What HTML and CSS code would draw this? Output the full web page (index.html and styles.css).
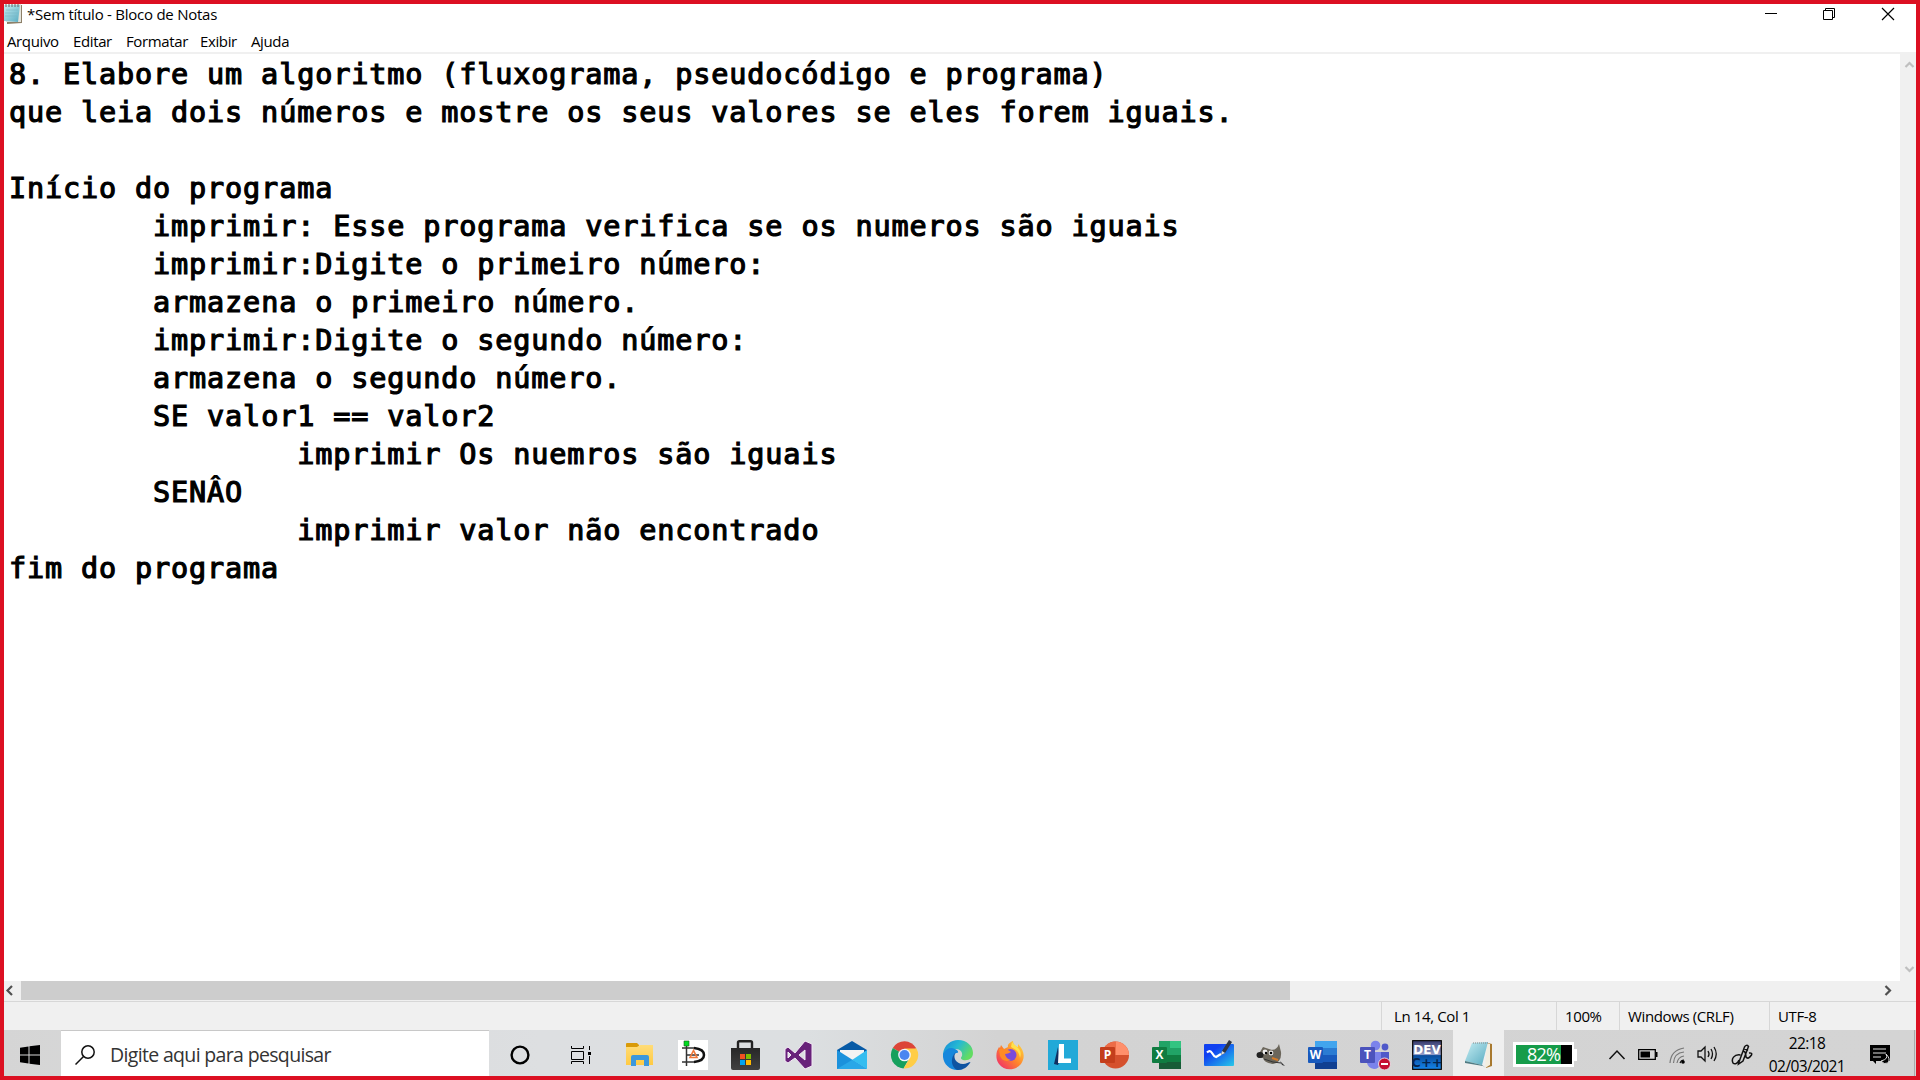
FILE: index.html
```html
<!DOCTYPE html>
<html lang="pt-BR">
<head>
<meta charset="utf-8">
<title>*Sem título - Bloco de Notas</title>
<link rel="stylesheet" href="styles.css">
</head>
<body>
<div class="screen">
  <header class="titlebar">
    <svg class="app-icon" width="19" height="20" viewBox="0 0 19 20"><path d="M3 2L18 1V19L3 20Z" fill="#8d8069"/><path d="M2 1L17 0V18L2 18Z" fill="#e4e4dc"/><path d="M0 1H16L14 18L0 17Z" fill="url(#note)"/><path d="M2 0V3M5 0V3M8 0V3M11 0V3M14 0V3" stroke="#666" stroke-width="1"/><path d="M2 6H14M1 9H14M1 12H13" stroke="#7ab6c2" stroke-width=".6"/></svg>
    <span class="caption">*Sem título - Bloco de Notas</span>
    <div class="window-buttons">
      <svg width="58" height="20" viewBox="0 0 58 20"><path d="M23 9.500H35" stroke="#000"/></svg>
      <svg width="59" height="20" viewBox="0 0 59 20" fill="none" stroke="#000"><path d="M23.500 6.500H32.500V15.500H23.500ZM25.500 6V4.500H34.500V13.500H33"/></svg>
      <svg width="57" height="20" viewBox="0 0 57 20"><path d="M23 4L35 16M35 4L23 16" stroke="#000" stroke-width="1.200"/></svg>
    </div>
  </header>
  <nav class="menubar"><span class="m1">Arquivo</span><span class="m2">Editar</span><span class="m3">Formatar</span><span class="m4">Exibir</span><span class="m5">Ajuda</span></nav>
  <main class="editor">
<pre class="text">8. Elabore um algoritmo (fluxograma, pseudocódigo e programa)
que leia dois números e mostre os seus valores se eles forem iguais.

Início do programa
	imprimir: Esse programa verifica se os numeros são iguais
	imprimir:Digite o primeiro número:
	armazena o primeiro número.
	imprimir:Digite o segundo número:
	armazena o segundo número.
	SE valor1 == valor2
		imprimir Os nuemros são iguais
	SENÂO
		imprimir valor não encontrado
fim do programa</pre>
    <div class="vscroll">
      <svg width="16" height="20" viewBox="0 0 16 20"><path d="M5.500 13L9.500 9L13.500 13" fill="none" stroke="#bfbfbf" stroke-width="2.200"/></svg>
      <svg width="16" height="20" viewBox="0 0 16 20"><path d="M5.500 6L9.500 10L13.500 6" fill="none" stroke="#bfbfbf" stroke-width="2.200"/></svg>
    </div>
  </main>
  <div class="hscroll">
    <svg width="17" height="19" viewBox="0 0 17 19"><path d="M8 5L3.500 9.500L8 14" fill="none" stroke="#505050" stroke-width="2.200"/></svg>
    <div class="thumb"></div>
    <svg class="right-arrow" width="17" height="19" viewBox="0 0 17 19"><path d="M3.500 5L8 9.500L3.500 14" fill="none" stroke="#505050" stroke-width="2.200"/></svg>
  </div>
  <footer class="status">
    <span class="s1">Ln 14, Col 1</span><span class="s2">100%</span><span class="s3">Windows (CRLF)</span><span class="s4">UTF-8</span>
  </footer>
  <div class="taskbar">
    <div class="start"><svg width="20" height="20" viewBox="0 0 20 20"><path d="M0 2.800L8.500 1.500V9.500H0ZM9.500 1.300L20 0V9.500H9.500ZM0 10.500H8.500V18.600L0 17.300ZM9.500 10.500H20V20L9.500 18.700Z"/></svg></div>
    <div class="search">
      <svg width="20" height="20" viewBox="0 0 20 20" fill="none" stroke="#111" stroke-width="1.500"><circle cx="13" cy="7" r="6.200"/><path d="M8.500 11.500L.5 19.500"/></svg>
      <span>Digite aqui para pesquisar</span>
    </div>
    <div class="cell sys"><svg width="20" height="20" viewBox="0 0 20 20"><circle cx="10" cy="10" r="8.400" fill="none" stroke="#000" stroke-width="2.400"/></svg></div>
    <div class="cell view"><svg width="20" height="20" viewBox="0 0 20 20" fill="none" stroke="#000"><path d="M.5 1V3.500H12.500V1M.5 6.500H12.500V14.500H.5ZM.5 19V16.500H12.500V19M18.500 1V5M18.500 11V19"/><path d="M17 7H20V10H17Z" fill="#000" stroke="none"/></svg></div>
    <div class="apps near">
      <div class="cell"><svg width="30" height="30" viewBox="0 0 30 30"><path d="M1 4Q1 3 2 3H12L14 5V8H1Z" fill="#d99a08"/><path d="M1 7H12L15 5H28V25H1Z" fill="url(#folder)"/><path d="M6 26V17Q6 15 8 15H22Q24 15 24 17V26H19V20H11V26Z" fill="#3c98dc"/></svg></div>
      <div class="cell"><svg width="30" height="30" viewBox="0 0 30 30"><path fill="#fff" d="M0 0H30V30H0Z"/><g fill="none" stroke="#333" stroke-width="1.500"><path d="M8.500 4V26M4 8H17M4 22H17M8 15H21"/></g><path d="M16 8Q26 9 26 15T16 22" fill="none" stroke="#111" stroke-width="2.500"/><path d="M12 17.500L15.500 10.500L19 17.500Z" fill="none" stroke="#f07838" stroke-width="1.600"/><path d="M6 1H11V6H6Z" fill="#00dc20" stroke="#175b1e" stroke-width=".6"/></svg></div>
      <div class="cell"><svg width="30" height="30" viewBox="0 0 30 30"><path d="M7 10V2.500Q7 1.200 8.500 1.200H19.500Q21 1.200 21 2.500V10" fill="none" stroke="#222" stroke-width="2.400"/><path d="M0 8H29V28Q29 30 27 30H2Q0 30 0 28Z" fill="url(#bag)"/><path d="M9 14H14V19H9Z" fill="#f25022"/><path d="M15 14H20V19H15Z" fill="#7fba00"/><path d="M9 20H14V25H9Z" fill="#00a4ef"/><path d="M15 20H20V25H15Z" fill="#ffb900"/></svg></div>
      <div class="cell"><svg width="30" height="30" viewBox="0 0 30 30"><path d="M1 9L4 7L11 13L21 1L28 4V26L21 29L11 18L4 23L1 21ZM4 12V18L7 15ZM21 10L15 15L21 20Z" fill="#68217a" fill-rule="evenodd" stroke="#f3eaf5" stroke-width="1"/></svg></div>
      <div class="cell"><svg width="30" height="30" viewBox="0 0 30 30"><path d="M0 10L15 1L30 10V16H0Z" fill="#075aa6"/><path d="M3 10H27V15L15 21L3 14Z" fill="#f3f3f3"/><path d="M0 10L30 29H0Z" fill="#1b91dc"/><path d="M30 10V29L15 20Z" fill="#35bdf0"/><path d="M0 29L15 20L30 29Z" fill="#2aa7e8"/></svg></div>
      <div class="cell"><svg width="30" height="30" viewBox="0 0 30 30"><path d="M14.500 15L2.800 8A13.600 13.600 0 0 1 26.300 8.200Z" fill="#dc4538"/><path d="M14.500 15L2.800 8A13.600 13.600 0 0 0 13.500 28.500L19.500 18Z" fill="#16a05d"/><path d="M14.500 8.500H26.500A13.600 13.600 0 0 1 13.500 28.500L20.500 17Z" fill="#ffcd46"/><circle cx="14.500" cy="15" r="6.300" fill="#f2f5fb"/><circle cx="14.500" cy="15" r="5" fill="#4a86f0"/></svg></div>
      <div class="cell"><svg width="30" height="30" viewBox="0 0 30 30"><path d="M0 14C1 5 8 0 15 0C24 0 30 6 30 13C30 18 26 21 20 20C17 19 18 17 19 16C20 12 17 9 13 9C7 9 3 12 0 17Z" fill="url(#edge)"/><path d="M0 14C3 8 8 7 12 9C16 11 16 13 13 13C9 15 9 22 13 26C15 28 18 29 20 29C8 33-1 24 0 14Z" fill="#1687dc"/><path d="M13 12C9 17 13 24 20 24C23 24 26 22 27.500 22C25 27 20 30 15 30C9 29 6 18 13 12Z" fill="#0f53a1"/></svg></div>
      <div class="cell"><svg width="30" height="30" viewBox="0 0 30 30"><path d="M1 11L3 7L4 8L5 5L8 9L12 7C11 4 15 2 17 1C17 5 21 7 22 7L22 4C29 11 29 18 25 24C19 31 8 31 3 24C0 20 0 15 1 11Z" fill="url(#fire)"/><path d="M16 2C21 8 27 9 24 18C23 10 18 9 15 7Z" fill="#ffe14b"/><circle cx="14.500" cy="15" r="6" fill="#7a4bdc"/><path d="M3 9Q10 8 15 12Q12 14 9 14Q10 19 15 20Q7 23 4 16Z" fill="#ff8b25"/></svg></div>
    </div>
    <div class="apps far">
      <div class="cell"><svg width="30" height="30" viewBox="0 0 30 30"><path fill="#22a9d8" d="M0 0H30V30H0Z"/><path d="M10 7L6 24L10 25L12 20Z" fill="#102f61"/><path d="M11 4H16V18.500H23V23H10Z" fill="#fff"/></svg></div>
      <div class="cell"><svg width="30" height="30" viewBox="0 0 30 30"><circle cx="15.500" cy="15" r="13.500" fill="#d5502d"/><path d="M15.500 15V1.500A13.500 13.500 0 0 1 29 15Z" fill="#ff8f6b"/><path d="M15.500 15V1.500A13.500 13.500 0 0 0 2 15Z" fill="#ed6c47"/><rect x="0" y="7" width="15" height="16" rx="1" fill="#c43e1c"/><text x="7.500" y="19" class="tile-letter">P</text></svg></div>
      <div class="cell"><svg width="30" height="30" viewBox="0 0 30 30"><path fill="#21a366" d="M7 1H29V29H7Z"/><path fill="#33c481" d="M18 1H29V8H18Z"/><path fill="#107c41" d="M7 15H29V22H7Z"/><path fill="#185c37" d="M7 22H29V29H7Z"/><rect x="0" y="7" width="15" height="16" rx="1" fill="#107c41"/><text x="7.500" y="19" class="tile-letter">X</text></svg></div>
      <div class="cell"><svg width="30" height="30" viewBox="0 0 30 30"><rect y="4" width="30" height="22" rx="1" fill="url(#board)"/><path d="M3 12.500Q6 9.500 8 13T12 17L17 14" fill="none" stroke="#fff" stroke-width="2.200"/><path d="M17 15L18 11L25 0L28 2L21 13Z" fill="#303642"/><path d="M17 15L18 11L21 13Z" fill="#ddd"/></svg></div>
      <div class="cell"><svg width="30" height="30" viewBox="0 0 30 30"><path d="M4 12L7 7L13 9Q20 12 23 4L25 12Q26 22 17 24Q8 23 7 18L2 18Z" fill="#6b665b"/><ellipse cx="4" cy="15" rx="3.500" ry="3" fill="#222"/><circle cx="9" cy="12" r="2.400" fill="#eee"/><circle cx="15" cy="13" r="2.400" fill="#eee"/><circle cx="10" cy="13" r="1.200"/><circle cx="15" cy="13" r="1.300"/><path d="M16 18L22 20" fill="none" stroke="#d47b28" stroke-width="2"/><path d="M8 19L17 22L25 23" fill="none" stroke="#333" stroke-width="1"/><path d="M24 21L29 26L26 25Z" fill="#333"/></svg></div>
      <div class="cell"><svg width="30" height="30" viewBox="0 0 30 30"><path fill="#2b7cd3" d="M7 1H29V29H7Z"/><path fill="#41a5ee" d="M7 1H29V8H7Z"/><path fill="#185abd" d="M7 15H29V22H7Z"/><path fill="#103f91" d="M7 22H29V29H7Z"/><rect x="0" y="7" width="15" height="16" rx="1" fill="#185abd"/><text x="7.500" y="19" class="tile-letter">W</text></svg></div>
      <div class="cell"><svg width="32" height="30" viewBox="0 0 32 30"><circle cx="16.500" cy="5.500" r="4.800" fill="#7b83eb"/><circle cx="26" cy="7" r="3.400" fill="#5059c9"/><path d="M20 12H30V20Q29 26 22 24Z" fill="#5059c9"/><path d="M8 12H22V23Q20 29 15 29Q9 28 8 23Z" fill="#7b83eb"/><rect x="1" y="7" width="15" height="16" rx="1" fill="#4b53bc"/><text x="8.500" y="19" class="tile-letter">T</text><circle cx="25.500" cy="24" r="6" fill="#c50f32" stroke="#e7d8df"/><path d="M22 24H29" stroke="#fff" stroke-width="2"/></svg></div>
      <div class="cell"><svg width="30" height="30" viewBox="0 0 30 30"><rect x=".5" y=".5" width="29" height="29" rx="1" fill="url(#dev)" stroke="#111" stroke-width="1.500"/><text x="15" y="14" class="dev-top">DEV</text><text x="15" y="27" class="dev-bottom">C++</text></svg></div>
      <div class="cell active"><svg width="30" height="30" viewBox="0 0 30 30"><path d="M24 3L28 4V26L22 28Z" fill="#a8792f"/><path d="M23 3L26 4V25L21 28Z" fill="#f3eee0"/><path d="M8 3L24 2L18 25L1 21Z" fill="url(#note)"/><path d="M1 21L18 25L22 28L19 26L1 23Z" fill="#507b83"/><path d="M9 3L24 3" stroke="#888" stroke-dasharray="1 1"/></svg></div>
    </div>
    <div class="battery"><div class="charge">82%</div></div>
    <div class="tray">
      <svg width="20" height="24" viewBox="0 0 20 24" fill="none" stroke="#111" stroke-width="1.500"><path d="M2.500 16L10 8L17.500 16"/></svg>
      <svg width="20" height="24" viewBox="0 0 20 24"><path d="M.7 6.700H17.300V16.300H.7Z" fill="none" stroke="#000" stroke-width="1.300"/><path d="M2.500 8.500H12V14.500H2.500ZM18 9H19.500V14H18Z"/></svg>
      <svg width="18" height="24" viewBox="0 0 18 24" fill="none" stroke="#777" stroke-width="1.200"><path d="M1 20Q2 7 15 5M4.500 20Q5 10 15 9M8 20Q9 14 15 13"/><path d="M11 20Q12 17 15 17" stroke="#111"/><circle cx="14" cy="19" r="1.800" fill="#000" stroke="none"/></svg>
      <svg width="23" height="24" viewBox="0 0 23 24" fill="none" stroke="#111" stroke-width="1.300"><path d="M1 8H4L8 4V18L4 14H1ZM11 8Q13 11 11 14M14 6Q17 11 14 16M17 4Q21.500 11 17 18"/></svg>
      <svg width="23" height="24" viewBox="0 0 23 24" fill="none" stroke="#111" stroke-width="1.500"><path d="M8 19L13.500 4Q15.500 1 17.500 3.500L12 18L7.500 21ZM13 5.500L17 7.500M9.500 12C3 11 0 16 2 20C4 22 7 20 8 17M11.500 9C14 7 15 11 15 14Q17 17 20.500 12Q21.500 9.500 18 10"/></svg>
    </div>
    <div class="clock"><span class="time">22:18</span><span class="date">02/03/2021</span></div>
    <svg class="action" width="21" height="22" viewBox="0 0 21 22"><path d="M0 1H20V17H6V20L3 17H0Z"/><path d="M3 5H16M3 9H16M3 13H11" stroke="#ddd" stroke-width="1.200"/><path d="M16 10Q19 15 11 17Q14 21 18 19Q21 15 16 10Z" stroke="#ddd"/></svg>
    <div class="peek"></div>
  </div>
</div>
<svg class="defs" width="0" height="0"><defs>
  <linearGradient id="note" x2="1" y2="1"><stop stop-color="#c5edf3"/><stop offset="1" stop-color="#58abc0"/></linearGradient>
  <linearGradient id="folder" x2="0" y2="1"><stop stop-color="#ffdc78"/><stop offset="1" stop-color="#ffca42"/></linearGradient>
  <linearGradient id="bag" x2="0" y2="1"><stop stop-color="#272727"/><stop offset="1" stop-color="#414141"/></linearGradient>
  <linearGradient id="edge" x2="1" y2=".5"><stop stop-color="#1688d9"/><stop offset=".5" stop-color="#25b9d3"/><stop offset="1" stop-color="#62dc62"/></linearGradient>
  <linearGradient id="fire" x1="1" x2="0" y2="1"><stop stop-color="#ffe440"/><stop offset=".5" stop-color="#ff842c"/><stop offset="1" stop-color="#ed1f76"/></linearGradient>
  <linearGradient id="board" x2="1" y2="1"><stop offset=".3" stop-color="#1040f0"/><stop offset="1" stop-color="#28c9e8"/></linearGradient>
  <linearGradient id="dev" x2="0" y2="1"><stop stop-color="#31366a"/><stop offset=".48" stop-color="#999fca"/><stop offset=".52" stop-color="#0b4c9c"/><stop offset="1" stop-color="#1486ed"/></linearGradient>
</defs></svg>
</body>
</html>
```
FILE: styles.css
```css
* { box-sizing: border-box; }
body { margin: 0; overflow: hidden; font-family: "Open Sans", "Noto Sans", sans-serif; color: #000; }
svg { display: block; flex: none; }
.defs { position: absolute; }
.screen { width: 1920px; height: 1080px; border: 4px solid #dc1022; background: #fff; display: flex; flex-direction: column; }

.titlebar { height: 22px; flex: none; display: flex; align-items: flex-start; }
.caption { margin-left: 4px; font-size: 15px; line-height: 20px; letter-spacing: -.25px; white-space: nowrap; }
.window-buttons { margin-left: auto; display: flex; }
.menubar { height: 28px; flex: none; border-bottom: 2px solid #f0f0f0; display: flex; padding: 4px 0 0 3px; font-size: 15px; line-height: 23px; letter-spacing: -.38px; white-space: nowrap; }
.m1 { width: 66px; }
.m2 { width: 53px; }
.m3 { width: 74px; }
.m4 { width: 51px; }

.editor { height: 927px; flex: none; display: flex; }
.text { flex: 1; margin: 0; padding: 2px 0 0 5px; font: 28.5px/38px "DejaVu Sans Mono", monospace; letter-spacing: .85px; tab-size: 8; -webkit-text-stroke: 1.2px #000; }
.vscroll { width: 16px; background: #f0f0f0; display: flex; flex-direction: column; justify-content: space-between; }
.hscroll { height: 20px; flex: none; background: #f0f0f0; display: flex; }
.thumb { width: 1269px; height: 19px; background: #cdcdcd; }
.right-arrow { margin-left: auto; margin-right: 17px; }

.status { height: 29px; flex: none; border-top: 1px solid #d7d7d7; background: #f0f0f0; display: flex; justify-content: flex-end; font-size: 15px; line-height: 28px; letter-spacing: -.38px; white-space: nowrap; }
.status span { height: 28px; border-left: 1px solid #d7d7d7; }
.status .s1 { width: 175px; padding-left: 12px; }
.status .s2 { width: 63px; padding-left: 8px; }
.status .s3 { width: 150px; padding-left: 8px; }
.status .s4 { width: 147px; padding-left: 8px; }

.taskbar { height: 46px; flex: none; background: linear-gradient(90deg, #d5d5d5, #dddfe1 28%, #dcdfe1 42%, #d3d3d3 52%, #d4d4d4); display: flex; align-items: center; }
.start { width: 57px; padding: 3px 0 0 16px; }
.search { width: 428px; height: 46px; border-top: 1px solid #c8c8c8; background: #fff; display: flex; align-items: center; padding: 2px 0 0 14px; gap: 15px; font-size: 19.5px; letter-spacing: -.66px; color: #333; white-space: nowrap; }
.cell { height: 46px; display: flex; align-items: center; justify-content: center; padding-top: 4px; }
.sys { width: 62px; }
.view { width: 60px; margin-right: 2px; }
.apps { display: flex; }
.near .cell { width: 53px; }
.far .cell { width: 52px; }
.far .active { width: 51px; background: #efefef; }
.tile-letter { font: bold 12px "Open Sans", sans-serif; fill: #fff; text-anchor: middle; }
.dev-top { font: bold 12px "DejaVu Sans", sans-serif; fill: #fff; text-anchor: middle; }
.dev-bottom { font: bold 13px "DejaVu Sans", sans-serif; fill: #05254f; text-anchor: middle; }
.battery { width: 61px; height: 25px; margin: 3px 0 0 9px; border: 3px solid #fff; border-right-width: 2px; background: #000; position: relative; padding-right: 11px; }
.battery::after { content: ""; position: absolute; left: 58px; top: 4px; width: 3px; height: 12px; background: #fff; }
.charge { height: 19px; background: #169c4a; color: #fff; font-size: 18px; line-height: 19px; letter-spacing: -.8px; text-align: right; padding-right: 1px; }
.tray { margin: 3px 0 0 33px; display: flex; align-items: center; }
.tray svg:nth-child(2) { margin-left: 11px; }
.tray svg:nth-child(3) { margin-left: 11px; }
.tray svg:nth-child(4) { margin-left: 10px; }
.tray svg:nth-child(5) { margin-left: 11px; }
.clock { width: 80px; margin-left: 13px; height: 46px; display: flex; flex-direction: column; align-items: center; font-size: 15.5px; line-height: 23px; letter-spacing: -.6px; padding-top: 2px; white-space: nowrap; }
.action { margin: 3px 23px 0 auto; }
.peek { width: 2px; height: 46px; border-left: 1px solid #aaa; }
```
